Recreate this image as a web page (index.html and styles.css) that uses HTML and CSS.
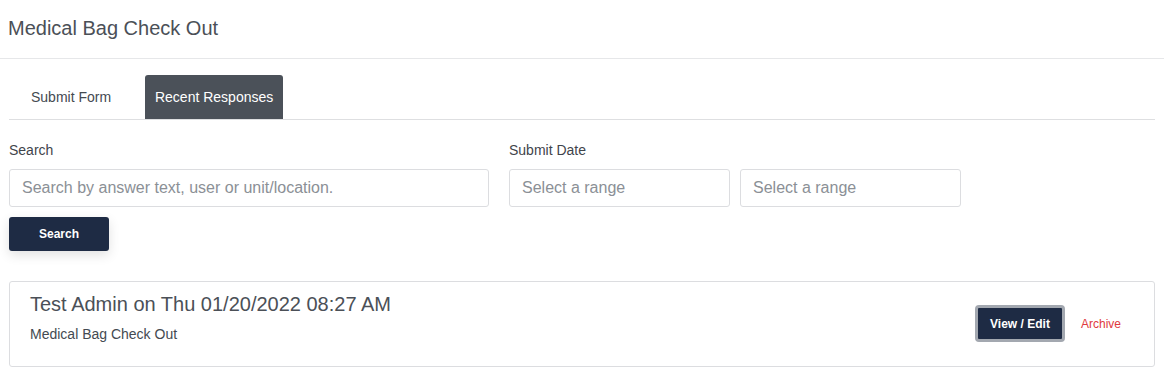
FILE: index.html
```html
<!DOCTYPE html>
<html>
<head>
<meta charset="utf-8">
<link rel="stylesheet" href="styles.css">
</head>
<body>
<header class="page-header">
  <h1 class="page-title">Medical Bag Check Out</h1>
</header>
<main class="content">
  <nav class="tabs">
    <a class="tab">Submit Form</a>
    <a class="tab tab-active">Recent Responses</a>
  </nav>
  <section class="filters">
    <div class="filter-row">
      <div class="field field-search">
        <label class="field-label">Search</label>
        <input class="input" type="text" placeholder="Search by answer text, user or unit/location.">
      </div>
      <div class="field field-date">
        <label class="field-label">Submit Date</label>
        <div class="date-pair">
          <input class="input input-date" type="text" placeholder="Select a range">
          <input class="input input-date" type="text" placeholder="Select a range">
        </div>
      </div>
    </div>
    <button class="btn btn-search">Search</button>
  </section>
  <article class="response-card">
    <div class="response-info">
      <div class="response-title">Test Admin on Thu 01/20/2022 08:27 AM</div>
      <div class="response-sub">Medical Bag Check Out</div>
    </div>
    <div class="response-actions">
      <button class="btn btn-view">View / Edit</button>
      <a class="archive-link">Archive</a>
    </div>
  </article>
</main>
</body>
</html>
```

FILE: styles.css
```css
* { box-sizing: border-box; }
html, body { margin: 0; padding: 0; background: #fff; }
body {
  font-family: "Liberation Sans", Arial, sans-serif;
  color: #4a4f56;
}
.page-header {
  height: 59px;
  border-bottom: 1px solid #e6e7e9;
  padding: 16px 8px 0;
}
.page-title {
  margin: 0;
  font-size: 20px;
  font-weight: normal;
  line-height: 24px;
  color: #4b5057;
}
.content {
  padding: 16px 9px 0;
  width: 1164px;
}
.tabs {
  display: flex;
  border-bottom: 1px solid #dedfe1;
  height: 45px;
  width: 1146px;
}
.tab {
  display: flex;
  align-items: center;
  padding: 0 22px;
  font-size: 14px;
  color: #444a51;
  height: 44px;
  margin-right: 12px;
  border-radius: 3px 3px 0 0;
}
.tab-active {
  background: #4b5159;
  color: #fff;
  padding: 0;
  width: 138px;
  justify-content: center;
}
.filters {
  padding-top: 22px;
}
.filter-row {
  display: flex;
  gap: 20px;
}
.field { display: flex; flex-direction: column; }
.field-label {
  font-size: 14px;
  line-height: 17px;
  color: #3f444b;
  margin-bottom: 10px;
}
.field-search { width: 480px; }
.date-pair { display: flex; gap: 10px; }
.input {
  height: 38px;
  border: 1px solid #dcdde0;
  border-radius: 3px;
  padding: 0 12px;
  font-family: "Liberation Sans", Arial, sans-serif;
  font-size: 16px;
  color: #333;
  outline: none;
}
.input::placeholder { color: #8b9096; }
.field-search .input { width: 480px; }
.input-date { width: 221px; }
.btn {
  font-family: "Liberation Sans", Arial, sans-serif;
  font-weight: bold;
  font-size: 12px;
  color: #fff;
  background: #1e2b44;
  border: none;
  border-radius: 3px;
  cursor: pointer;
}
.btn-search {
  margin-top: 10px;
  width: 100px;
  height: 34px;
  box-shadow: 0 4px 12px rgba(0,0,0,0.12);
}
.response-card {
  margin-top: 30px;
  width: 1146px;
  height: 86px;
  border: 1px solid #dcdde0;
  border-radius: 3px;
  display: flex;
  justify-content: space-between;
  padding: 10px 20px 0;
}
.response-title {
  font-size: 20px;
  line-height: 24px;
  color: #4b5057;
}
.response-sub {
  font-size: 14px;
  color: #444a51;
  margin-top: 10px;
}
.response-actions {
  display: flex;
  align-items: center;
  gap: 16px;
  align-self: flex-start;
  margin-top: 13px;
  padding-right: 13px;
}
.btn-view {
  width: 90px;
  height: 37px;
  border: 3px solid #a3a8b0;
  border-radius: 4px;
}
.archive-link {
  font-size: 12px;
  color: #e0393e;
}
```
